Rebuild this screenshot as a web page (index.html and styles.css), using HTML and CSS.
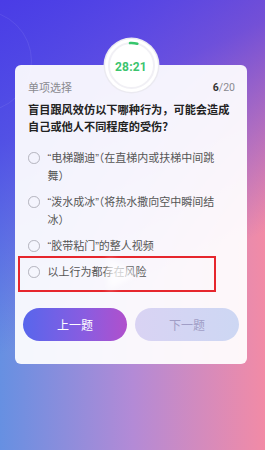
FILE: index.html
```html
<!DOCTYPE html>
<html lang="zh-CN">
<head>
<meta charset="utf-8">
<link rel="stylesheet" href="styles.css">
</head>
<body>
<div class="screen">
  <div class="deco-ring"></div>
  <div class="card">
    <div class="timer">
      <svg class="timer-ring" width="53" height="53" viewBox="0 0 53 53">
        <circle cx="26.5" cy="26.5" r="22.5" fill="none" stroke="#f1f0f5" stroke-width="2"/>
        <path d="M25 4.05 A22.5 22.5 0 0 1 32.3 4.76" fill="none" stroke="#36c66c" stroke-width="2.6" stroke-linecap="round"/>
      </svg>
      <span class="timer-text">28:21</span>
    </div>
    <div class="card-head">
      <span class="q-type">单项选择</span>
      <span class="q-count"><b>6</b>/20</span>
    </div>
    <div class="question">盲目跟风效仿以下哪种行为，可能会造成自己或他人不同程度的受伤？</div>
    <ul class="options">
      <li class="option"><span class="radio"></span><span class="opt-text">“电梯蹦迪”（在直梯内或扶梯中间跳舞）</span></li>
      <li class="option"><span class="radio"></span><span class="opt-text">“泼水成冰”（将热水撒向空中瞬间结冰）</span></li>
      <li class="option"><span class="radio"></span><span class="opt-text">“胶带粘门”的整人视频</span></li>
      <li class="option"><span class="radio"></span><span class="opt-text">以上行为都存在风险</span></li>
    </ul>
    <div class="actions">
      <button class="btn btn-prev">上一题</button>
      <button class="btn btn-next">下一题</button>
    </div>
  </div>
  <div class="highlight"></div>
  <div class="watermark"></div>
</div>
</body>
</html>
```
FILE: styles.css
```css
html, body {
  margin: 0;
  padding: 0;
}
body {
  width: 265px;
  height: 450px;
  overflow: hidden;
  font-family: "Noto Sans CJK SC", "Noto Sans", sans-serif;
}
.screen {
  position: relative;
  width: 265px;
  height: 450px;
  overflow: hidden;
  padding-top: 65px;
  box-sizing: border-box;
  background:
    linear-gradient(155deg, #4a3ce6 0%, rgba(74, 60, 230, 0.75) 25%, rgba(74, 60, 230, 0) 62%),
    linear-gradient(to right, #6690e2 0%, #b38ad6 50%, #f28ba6 100%);
}
.deco-ring {
  position: absolute;
  left: -70px;
  top: 10px;
  width: 100px;
  height: 100px;
  border-radius: 50%;
  border: 1px solid rgba(255, 255, 255, 0.08);
}
.card {
  position: relative;
  margin-left: 15px;
  width: 232px;
  background: rgba(255, 255, 255, 0.93);
  border-radius: 6px;
  padding: 15px 12px 23px 13px;
  box-sizing: border-box;
}
.timer {
  position: absolute;
  left: 50%;
  top: -26px;
  width: 53px;
  height: 53px;
  margin-left: -26.5px;
  border-radius: 50%;
  background: #fff;
  box-shadow: 0 0 0 1.5px #ebeaf1;
  display: flex;
  align-items: center;
  justify-content: center;
}
.timer-ring {
  position: absolute;
  left: 0;
  top: 0;
}
.timer-text {
  position: relative;
  top: 1px;
  font-family: Roboto, "Noto Sans", sans-serif;
  font-weight: 700;
  font-size: 12px;
  color: #3cc46e;
  letter-spacing: 0.2px;
}
.card-head {
  display: flex;
  justify-content: space-between;
  align-items: center;
  height: 14px;
  font-size: 11px;
  color: #8a8a90;
}
.q-count {
  font-family: Roboto, "Noto Sans", sans-serif;
  font-size: 10.5px;
  color: #8a8a90;
}
.q-count b {
  color: #333;
  font-weight: 700;
}
.question {
  margin-top: 7px;
  font-size: 11.2px;
  line-height: 17px;
  font-weight: 700;
  color: #222;
}
.options {
  list-style: none;
  margin: 14px 0 0 0;
  padding: 0;
  display: flex;
  flex-direction: column;
  gap: 8px;
}
.option {
  display: flex;
  align-items: flex-start;
  gap: 8px;
  font-family: "Liberation Sans", "Noto Sans CJK SC", sans-serif;
  font-size: 11px;
  line-height: 18px;
  color: #555;
}
.radio {
  flex: none;
  width: 9.5px;
  height: 9.5px;
  margin-top: 3px;
  border: 1.1px solid #b3b3bd;
  border-radius: 50%;
}
.opt-text {
  width: 177px;
}
.actions {
  display: flex;
  gap: 8px;
  margin: 27px -4px 0 -5px;
}
.btn {
  flex: 1;
  height: 33px;
  border: none;
  border-radius: 17px;
  font-family: "Noto Sans CJK SC", sans-serif;
  font-size: 12px;
  padding: 0;
}
.btn-prev {
  color: #fff;
  background: linear-gradient(to right, #5866ec, #8a5ce0 60%, #b050cc);
}
.btn-next {
  color: #a19ec6;
  background: linear-gradient(to right, #d9d3f3, #cdd7f3);
}
.highlight {
  position: absolute;
  left: 18px;
  top: 256px;
  width: 198px;
  height: 36px;
  border: 2.5px solid #e6262d;
  box-sizing: border-box;
}
.watermark {
  position: absolute;
  left: 108px;
  top: 258px;
  width: 0;
  height: 0;
  border-top: 16px solid transparent;
  border-bottom: 16px solid transparent;
  border-left: 30px solid rgba(255, 255, 255, 0.75);
  filter: blur(3px);
}
```
